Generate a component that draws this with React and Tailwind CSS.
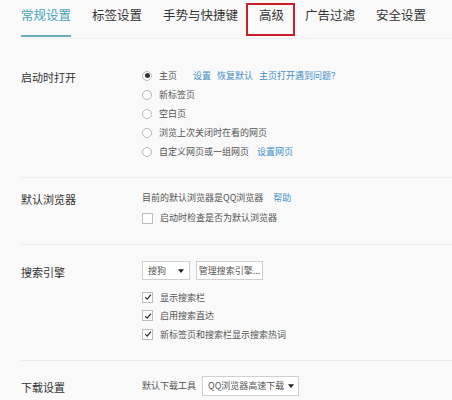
import React from 'react';

const tabs = ['常规设置', '标签设置', '手势与快捷键', '高级', '广告过滤', '安全设置'];

function Radio({ checked }) {
  return (
    <span className="w-[10px] h-[10px] rounded-full border border-[#b9b9b9] bg-white flex items-center justify-center shrink-0">
      {checked && <span className="w-[5px] h-[5px] rounded-full bg-[#333]" />}
    </span>
  );
}

function Checkbox({ checked }) {
  return (
    <span className="w-[11px] h-[11px] border border-[#bdbdbd] bg-white flex items-center justify-center shrink-0">
      {checked && (
        <svg viewBox="0 0 10 10" className="w-[8px] h-[8px]">
          <path d="M1.5 5.2 L4 7.6 L8.6 2.2" fill="none" stroke="#333" strokeWidth="1.5" />
        </svg>
      )}
    </span>
  );
}

function Caret() {
  return (
    <svg viewBox="0 0 8 5" className="w-[6px] h-[4px] shrink-0">
      <path d="M0 0 H8 L4 5 Z" fill="#222" />
    </svg>
  );
}

function Link({ children }) {
  return <span className="text-[#3f8fc5]">{children}</span>;
}

function Row({ children, h = 'h-[19px]' }) {
  return <div className={`flex items-center gap-[6px] whitespace-nowrap ${h}`}>{children}</div>;
}

function Section({ label, children, pt, pb, last }) {
  return (
    <div className={`flex ${pt} ${pb} ${last ? '' : 'border-b border-[#ececec]'}`}>
      <div className="w-[121px] shrink-0 text-[11px] text-[#333] leading-[19px] pt-[2px]">{label}</div>
      <div className="flex-1 text-[9px] text-[#555] whitespace-nowrap">{children}</div>
    </div>
  );
}

export default function App() {
  return (
    <div
      className="w-[452px] h-[400px] overflow-hidden bg-[#f9f9f9]"
      style={{ fontFamily: '"Noto Sans CJK SC", "Noto Sans", sans-serif' }}
    >
      <div className="pl-[21px]">
        {/* tabs */}
        <div className="flex gap-[21px] h-[39px] border-b border-[#f0f0f0]">
          {tabs.map((t, i) => (
            <div key={t} className="relative flex items-center">
              <span
                className={`text-[12.5px] leading-none pb-[7px] ${
                  i === 0 ? 'text-[#4aa3b6]' : 'text-[#333]'
                }`}
              >
                {t}
              </span>
              {i === 0 && <span className="absolute left-0 right-0 bottom-[1px] h-[2px] bg-[#6aaeb9]" />}
              {i === 3 && (
                <span className="absolute left-[-13px] right-[-11px] top-[3px] bottom-[2px] border-2 border-[#c8202a]" />
              )}
            </div>
          ))}
        </div>

        <div className="pt-[27px]" />

        <Section label="启动时打开" pt="" pb="pb-[16px]">
          <Row>
            <Radio checked />
            <span className="ml-[1px] w-[28px]">主页</span>
            <Link>设置</Link>
            <Link>恢复默认</Link>
            <Link>主页打开遇到问题？</Link>
          </Row>
          <Row>
            <Radio />
            <span className="ml-[1px]">新标签页</span>
          </Row>
          <Row>
            <Radio />
            <span className="ml-[1px]">空白页</span>
          </Row>
          <Row>
            <Radio />
            <span className="ml-[1px]">浏览上次关闭时在看的网页</span>
          </Row>
          <Row>
            <Radio />
            <span className="ml-[1px] w-[92px]">自定义网页或一组网页</span>
            <Link>设置网页</Link>
          </Row>
        </Section>

        <Section label="默认浏览器" pt="pt-[10px]" pb="pb-[16px]">
          <Row h="h-[20px]">
            <span className="mr-[4px]">目前的默认浏览器是QQ浏览器</span>
            <Link>帮助</Link>
          </Row>
          <Row h="h-[20px]">
            <Checkbox />
            <span className="ml-[1px]">启动时检查是否为默认浏览器</span>
          </Row>
        </Section>

        <Section label="搜索引擎" pt="pt-[16px]" pb="pb-[16px]">
          <div className="flex gap-[6px] h-[19px] mb-[8px]">
            <div className="w-[48px] h-[19px] border border-[#d0d0d0] bg-white flex items-center justify-between pl-[5px] pr-[5px]">
              <span>搜狗</span>
              <Caret />
            </div>
            <div className="w-[67px] h-[19px] border border-[#d0d0d0] bg-white flex items-center justify-center">
              管理搜索引擎...
            </div>
          </div>
          <Row h="h-[18.5px]">
            <Checkbox checked />
            <span className="ml-[1px]">显示搜索栏</span>
          </Row>
          <Row h="h-[18.5px]">
            <Checkbox checked />
            <span className="ml-[1px]">启用搜索直达</span>
          </Row>
          <Row h="h-[18.5px]">
            <Checkbox checked />
            <span className="ml-[1px]">新标签页和搜索栏显示搜索热词</span>
          </Row>
        </Section>

        <Section label="下载设置" pt="pt-[15px]" pb="" last>
          <div className="flex items-center gap-[6px] h-[20px]">
            <span>默认下载工具</span>
            <div className="w-[97px] h-[20px] border border-[#d0d0d0] bg-white flex items-center gap-[4px] pl-[5px] pr-[4px]">
              <span>QQ浏览器高速下载</span>
              <Caret />
            </div>
          </div>
        </Section>
      </div>
    </div>
  );
}
